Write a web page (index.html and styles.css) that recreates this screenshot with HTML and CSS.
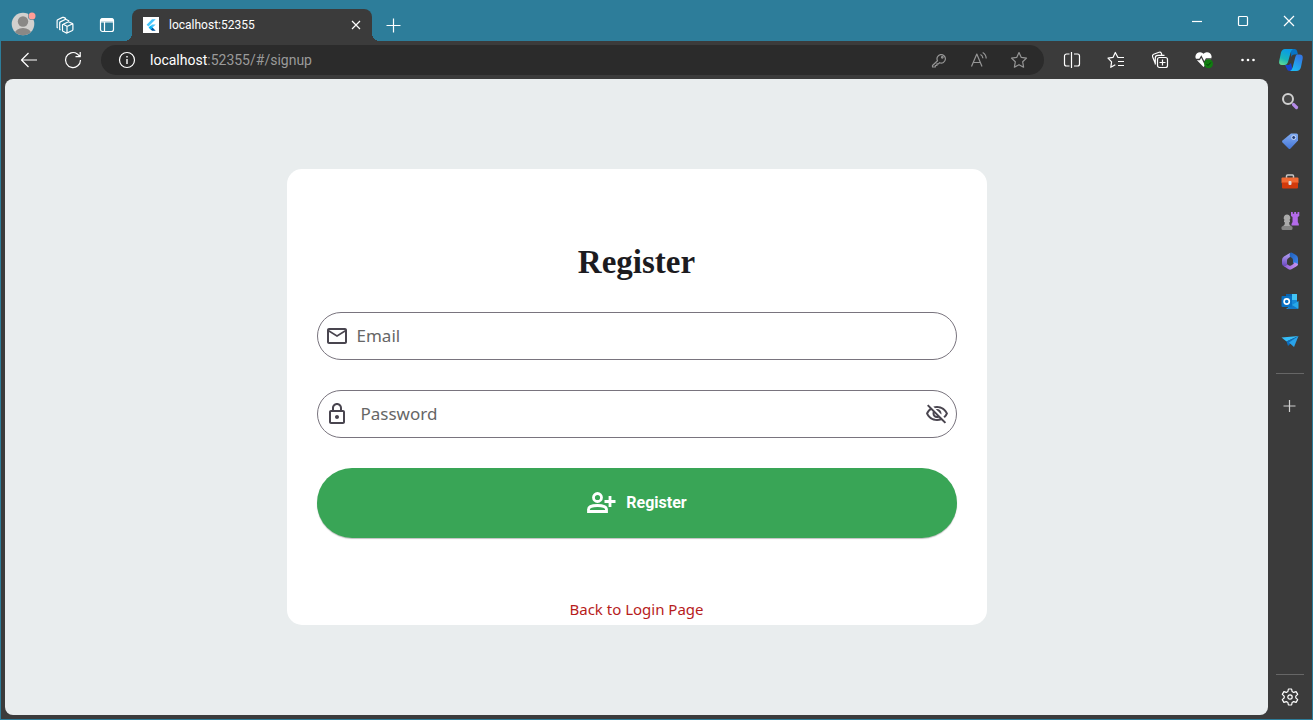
FILE: index.html
```html
<!DOCTYPE html>
<html lang="en">
<head>
<meta charset="utf-8">
<title>localhost:52355</title>
<link rel="stylesheet" href="styles.css">
</head>
<body>
<div class="window">
  <header class="titlebar">
    <button class="icon-btn profile" aria-label="Profile">
      <svg width="26" height="26" viewBox="0 0 26 26"><defs><clipPath id="face"><circle cx="12" cy="14" r="11.3"/></clipPath></defs><circle cx="12" cy="14" r="11.3" fill="#d2d0ce"/><g clip-path="url(#face)" fill="#8a8886"><circle cx="12" cy="11.500" r="5.200"/><ellipse cx="12" cy="24" rx="8.400" ry="6"/></g><circle cx="21" cy="6" r="4" fill="#2d7d9a"/><circle cx="21" cy="6" r="3.500" fill="#ff9e97"/></svg>
    </button>
    <button class="icon-btn" aria-label="Workspaces">
      <svg class="line" width="18" height="18" viewBox="0 0 18 18"><path d="M7.200 8.300 10.500 10q.5.300.5 1v6q-.2.300-.7 0L7 15.300q-.5-.3-.5-1V8.800q0-.6.700-.5zM7.200 8.300 12 6q.5-.3 1 0l3.500 1.600q.4.300.4 1v5q0 .6-.5.900L11 17M11 10.500l5.700-2.700M4.500 14l-.8-.5V6.800q0-.6.6-.9l4.900-2.400q.5-.2 1 0l3 1.500M1.800 12l-.7-.5V4.700q0-.6.600-.9l4.900-2.400q.5-.2 1 0l2.500 1.200"/></svg>
    </button>
    <button class="icon-btn" aria-label="Tab actions">
      <svg class="line" width="18" height="18" viewBox="0 0 18 18"><rect x="2.500" y="2.500" width="13" height="13" rx="2"/><path d="M2.500 6h13M6.500 6v9.500"/><path d="M3 4h12" stroke-width="3"/></svg>
    </button>
    <div class="tab">
      <svg width="16" height="16" viewBox="0 0 16 16"><path fill="#fff" d="M0 0h16v16H0z"/><path fill="#47c5fb" d="M9 2.200h3.700L5.500 9.500 3.600 7.700zM9 7.400h3.700l-3.200 3.200-1.900 1.900-1.900-1.900z"/><path fill="#00569e" d="m7.600 12.300 1.900-1.700 3.200 3.200H9z"/><path fill="#00b5f8" d="m5.700 10.600 1.900-1.900 1.900 1.900-1.900 1.900z"/></svg>
      <span class="tab-title">localhost:52355</span>
      <button class="tab-close" aria-label="Close tab"><svg class="line" width="10" height="10" viewBox="0 0 10 10"><path d="m1 1 8 8M9 1 1 9"/></svg></button>
    </div>
    <button class="icon-btn" aria-label="New tab"><svg class="line" width="16" height="16" viewBox="0 0 16 16"><path d="M8.500 1.500v14M1.500 8.500h14"/></svg></button>
    <div class="window-controls">
      <button class="control" aria-label="Minimize"><svg class="line" width="12" height="12" viewBox="0 0 12 12"><path d="M1 6.500h10"/></svg></button>
      <button class="control" aria-label="Maximize"><svg class="line" width="12" height="12" viewBox="0 0 12 12"><rect x="1.500" y="1.500" width="9" height="9" rx="1"/></svg></button>
      <button class="control" aria-label="Close"><svg class="line" width="12" height="12" viewBox="0 0 12 12"><path d="m1 1 10 10M11 1 1 11"/></svg></button>
    </div>
  </header>

  <nav class="toolbar" aria-label="Browser toolbar">
    <button class="tool" aria-label="Back"><svg class="line" width="18" height="18" viewBox="0 0 18 18"><path d="M17 9H1.500M8.500 2l-7 7 7 7"/></svg></button>
    <button class="tool" aria-label="Refresh"><svg class="line" width="18" height="18" viewBox="0 0 18 18"><path d="M16.500 9A7.500 7.500 0 1 1 13.300 2.900L16 5.500M16.200 1v4.700h-4.700"/></svg></button>
    <div class="address">
      <button class="address-btn info" aria-label="Site information"><svg class="line" width="18" height="18" viewBox="0 0 18 18"><circle cx="9" cy="9" r="7.500"/><path d="M9 8v5M9 5v1.500" stroke-width="1.400"/></svg></button>
      <div class="url" role="textbox" aria-label="Address"><span class="host">localhost</span>:52355/#/signup</div>
      <button class="address-btn" aria-label="Passwords"><svg class="line" width="18" height="18" viewBox="0 0 18 18"><path d="M7.500 9.800 2.500 14.500v1.500h2.800V14.500h1.600v-1.600h1.500l1.200-1.200A4.200 4.200 0 1 0 7.500 9.800z"/><circle cx="12.300" cy="6.300" r=".8"/></svg></button>
      <button class="address-btn" aria-label="Read aloud"><svg class="line" width="18" height="18" viewBox="0 0 18 18"><path d="M1.500 15.500 6.800 3l5.200 12.500M3.300 11.500h7M10.500 3.500q2.200 1.200 2.400 3.800M12.700 1.500q3.400 1.900 3.500 6"/></svg></button>
      <button class="address-btn" aria-label="Add to favorites"><svg class="line" width="18" height="18" viewBox="0 0 18 18"><path d="m9 1.500 2.300 4.900 5.200.7-3.800 3.700.9 5.400L9 13.700l-4.600 2.500.9-5.400-3.800-3.700 5.200-.7z"/></svg></button>
    </div>
    <div class="tools">
      <button class="tool" aria-label="Split screen"><svg class="line" width="18" height="18" viewBox="0 0 18 18"><path d="M6.500 3H3.500a2 2 0 0 0-2 2v8a2 2 0 0 0 2 2h3M11 3h3.500a2 2 0 0 1 2 2v8a2 2 0 0 1-2 2H11M8.500 1v16"/></svg></button>
      <button class="tool" aria-label="Favorites"><svg class="line" width="18" height="18" viewBox="0 0 18 18"><path d="M11 6.500 8.300 1.500 6 6.400l-5 .7 3.600 3.700-.8 5.500 4.500-2.500M10.500 6.500h6.500M11 10.500h6M11 14.500h6"/></svg></button>
      <button class="tool" aria-label="Collections"><svg class="line" width="18" height="18" viewBox="0 0 18 18"><rect x="6.500" y="6.500" width="10" height="10" rx="2"/><path d="M11.500 8.500v6M8.500 11.500h6M4.300 13.500V7q0-2.700 2.700-2.700h6.500M4.300 12.500 1.600 5.800Q1 4 2.600 3.300l5.500-2q1.500-.5 2.300 1l.6 2"/></svg></button>
      <button class="tool" aria-label="Browser essentials"><svg width="20" height="20" viewBox="0 0 20 20"><path fill="#fff" d="M9.500 17 2.500 9.800a4.600 4.600 0 0 1 7-6 4.600 4.600 0 0 1 7 6z"/><path fill="none" stroke="#3b3b3b" stroke-width="1.300" d="M1 9.500h4.500l1.800-3 3 6 2-3.500h5"/><circle cx="14.500" cy="13.800" r="4.500" fill="#107c10"/><path fill="none" stroke="#053f05" d="m12.500 14 1.500 1.500 2.800-3"/></svg></button>
      <button class="tool" aria-label="Settings and more"><svg width="18" height="18" viewBox="0 0 18 18" fill="#fff"><circle cx="3.500" cy="9" r="1.300"/><circle cx="9" cy="9" r="1.300"/><circle cx="14.500" cy="9" r="1.300"/></svg></button>
    </div>
    <button class="tool copilot" aria-label="Copilot"><svg width="26" height="26" viewBox="0 0 26 26"><defs><linearGradient id="cp1" x1="0" y1="1" x2=".4" y2="0"><stop offset="0" stop-color="#70e38b"/><stop offset=".45" stop-color="#18b5ba"/><stop offset="1" stop-color="#0a9be4"/></linearGradient><linearGradient id="cp2" x1="0" y1="1" x2=".5" y2="0"><stop offset="0" stop-color="#19c3f4"/><stop offset="1" stop-color="#3279e5"/></linearGradient></defs><path fill="#0873c5" d="M13 2h3.500q2 0 2.600 2l.9 3.500h-4q-2 0-2.800 2.500z"/><path fill="#1742cf" d="M7 18h4l2-2 2 8h-3q-2.600 0-3.300-2.500z"/><path fill="url(#cp1)" d="M7 2h8q-1.600.7-2.500 4L10 15q-1 3-3.500 3H4q-3.500 0-2.800-4L3 5.500Q4 2 7 2z"/><path fill="url(#cp2)" d="M19 7.500h2.500q3.800 0 3.200 4L23 20q-1 4-4.500 4H12q2-1 2.800-4l2.400-9.500q.5-2.500 1.800-3z"/></svg></button>
  </nav>

  <main class="page">
    <form class="card">
      <h1 class="card-title">Register</h1>
      <label class="field">
        <svg class="field-icon" viewBox="0 0 24 24"><path d="M22 6c0-1.100-.9-2-2-2H4c-1.100 0-2 .9-2 2v12c0 1.100.9 2 2 2h16c1.100 0 2-.9 2-2V6zm-2 0-8 5-8-5h16zm0 12H4V8l8 5 8-5v10z"/></svg>
        <input class="field-input" type="email" placeholder="Email" aria-label="Email">
      </label>
      <div class="field field-password">
        <svg class="field-icon" viewBox="0 0 24 24"><path d="M18 8h-1V6c0-2.760-2.240-5-5-5S7 3.240 7 6v2H6c-1.100 0-2 .9-2 2v10c0 1.100.9 2 2 2h12c1.100 0 2-.9 2-2V10c0-1.100-.9-2-2-2zM9 6c0-1.660 1.340-3 3-3s3 1.340 3 3v2H9V6zm9 14H6V10h12v10zm-6-3c1.100 0 2-.9 2-2s-.9-2-2-2-2 .9-2 2 .9 2 2 2z"/></svg>
        <input class="field-input" type="password" placeholder="Password" aria-label="Password">
        <button class="eye" type="button" aria-label="Show password"><svg class="field-icon" viewBox="0 0 24 24"><path d="M12 6c3.790 0 7.170 2.130 8.820 5.500-.59 1.220-1.420 2.270-2.410 3.120l1.410 1.410c1.390-1.230 2.490-2.770 3.180-4.530C21.270 7.110 17 4 12 4c-1.270 0-2.490.2-3.640.57l1.650 1.650C10.660 6.090 11.320 6 12 6zm-1.070 1.140L13 9.210c.57.25 1.030.71 1.280 1.280l2.070 2.070c.08-.34.14-.7.14-1.070C16.500 9.010 14.480 7 12 7c-.37 0-.72.050-1.070.14zM2.010 3.870l2.680 2.680C3.060 7.830 1.770 9.530 1 11.500 2.730 15.890 7 19 12 19c1.520 0 2.980-.29 4.320-.82l3.420 3.420 1.410-1.410L3.420 2.450 2.010 3.870zm7.500 7.500 2.610 2.610c-.04.010-.08.020-.12.020-1.380 0-2.500-1.120-2.500-2.500 0-.05.010-.08.010-.13zm-3.400-3.400 1.750 1.750c-.23.55-.36 1.150-.36 1.780 0 2.480 2.020 4.500 4.500 4.500.63 0 1.230-.13 1.770-.36l.98.98c-.88.24-1.800.38-2.750.38-3.790 0-7.170-2.130-8.820-5.500.7-1.430 1.720-2.610 2.930-3.530z"/></svg></button>
      </div>
      <button class="submit" type="button">
        <svg width="30" height="30" viewBox="0 0 30 30"><g fill="none" stroke="#fff" stroke-width="2.800"><circle cx="11.500" cy="9.500" r="4"/><path d="M2.500 23.500v-2q0-4 9-4t9 4v2zM24 8v11M18.500 13.500h11"/></g></svg>
        <span>Register</span>
      </button>
      <a class="back-link" href="#/login">Back to Login Page</a>
    </form>
  </main>

  <aside class="sidebar" aria-label="Browser sidebar">
    <button class="side-btn" aria-label="Search"><svg width="18" height="18" viewBox="0 0 18 18"><path stroke="#b58be8" stroke-width="3.200" stroke-linecap="round" d="m12.500 12.500 3 3"/><circle cx="7" cy="7" r="5" fill="#464646" stroke="#d0d0d0" stroke-width="2"/></svg></button>
    <button class="side-btn" aria-label="Shopping"><svg width="18" height="18" viewBox="0 0 18 18"><defs><linearGradient id="tag" x2="0" y2="1"><stop stop-color="#82acf1"/><stop offset="1" stop-color="#4476d7"/></linearGradient></defs><path fill="url(#tag)" d="M10 1.500h5.500q1.500 0 1.500 1.500v5.500L9.500 16.500q-1 1-2 0l-6-6q-1-1 0-2z"/><circle cx="12.700" cy="5.500" r="2" fill="#26427b" stroke="#cfe0ff"/></svg></button>
    <button class="side-btn" aria-label="Tools"><svg width="18" height="18" viewBox="0 0 18 18"><path fill="none" stroke="#c8c8c8" stroke-width="1.500" d="M5.500 6V4q0-1 1-1h5q1 0 1 1v2"/><rect x=".5" y="5.500" width="17" height="6" rx="1" fill="#f26a34"/><path fill="#d13a0c" d="M1 10.500h16v5q0 1-1 1H2q-1 0-1-1z"/><rect x="7.500" y="9" width="3" height="4" rx="1" fill="#ddd"/></svg></button>
    <button class="side-btn" aria-label="Games"><svg width="20" height="20" viewBox="0 0 20 20"><path fill="#b36bea" d="M11 1h1.800v1.800h1.400V1h1.900v1.800h1.400V1h1.800v4l-1.500 1v5l1 2v1.500h-7.300V13l1-2V6L11 5z"/><path fill="#aaa" d="M7 3.500a3.300 3.300 0 0 1 2.200 5.800H10v2H9q0 2.700 2 3.700H3q2-1 2-3.700H4v-2h.8A3.300 3.300 0 0 1 7 3.500z"/><rect x="1.500" y="15" width="11" height="4" rx="1.500" fill="#858585"/></svg></button>
    <button class="side-btn" aria-label="Microsoft 365"><svg width="18" height="18" viewBox="0 0 18 18"><defs><linearGradient id="m1" x2="0" y2="1"><stop stop-color="#b9a5f5"/><stop offset="1" stop-color="#6a48c0"/></linearGradient><linearGradient id="m2" x2="1" y2="1"><stop stop-color="#1f5fb8"/><stop offset="1" stop-color="#3f86f0"/></linearGradient><linearGradient id="m3" x2="1"><stop stop-color="#8b5bd8"/><stop offset="1" stop-color="#c995f2"/></linearGradient></defs><path fill="url(#m1)" d="M9.500.7 3 4.400Q1 5.600 1 8v3.500q0 2.200 1.800 2.600 2.200.4 3.200-1.800V8.500q0-1.500 1.300-2.300L9 5.100V3q0-1.500.5-2.300z"/><path fill="url(#m2)" d="M9.500.7q.8-.4 1.500 0l4 2.200q2 1.200 2 3.500v5q0 1.500-1.500 1.500L12 11V8q0-1.500-1.300-2.200L9 4.800q-.9-3 .5-4.100z"/><path fill="url(#m3)" d="M2.500 14q2.500.3 3.500-1.800l2 1.200q1 .5 2 0l2-1.200q1.300-.8 1.300-2L17 12q0 1.500-1.800 2.600L10.500 17.300q-1.500.8-3 0z"/></svg></button>
    <button class="side-btn" aria-label="Outlook"><svg width="18" height="18" viewBox="0 0 18 18"><path fill="#1689d8" d="M5 2h11v12H5z"/><path fill="#43c4f5" d="M11 2h5v6h-5z"/><path fill="#0a64ad" d="M5 2h6v4H5z"/><path fill="#28a8ea" d="M5 17h11.500q1 0 1-1V9L11 13z"/><path fill="#1279c9" d="m11 13 6.500 4H6z"/><rect x=".5" y="4" width="10.500" height="11" rx="1" fill="#0871c4"/><circle cx="5.700" cy="9.500" r="2.600" fill="none" stroke="#fff" stroke-width="1.600"/></svg></button>
    <button class="side-btn" aria-label="Drop"><svg width="18" height="18" viewBox="0 0 18 18"><path fill="#35bdf8" d="M.5 5.500 17.500 4 5.500 9.500z"/><path fill="#0d6fbe" d="M5.500 9.500 17.500 4 7 14z"/><path fill="#29a3ea" d="M8 10.500 17.500 4 13 15z"/></svg></button>
    <hr class="side-rule">
    <button class="side-btn" aria-label="Customize"><svg class="line soft" width="14" height="14" viewBox="0 0 14 14"><path d="M6.500 1v12M.5 7h12"/></svg></button>
    <div class="side-foot">
      <hr class="side-rule">
      <button class="side-btn" aria-label="Sidebar settings"><svg class="line" width="18" height="18" viewBox="0 0 18 18"><path d="m7.400 1-.5 2.500-1.600.9L2.900 3.600 1.300 6.400l1.900 1.700v1.800l-1.900 1.700 1.600 2.800 2.400-.8 1.600.9.500 2.500h3.200l.5-2.500 1.600-.9 2.400.8 1.600-2.800-1.900-1.700V8.100l1.900-1.700-1.600-2.800-2.400.8-1.600-.9-.5-2.500z"/><circle cx="9" cy="9" r="2.200"/></svg></button>
    </div>
  </aside>
</div>
</body>
</html>
```
FILE: styles.css
```css
* {
  box-sizing: border-box;
}

body {
  margin: 0;
  font-family: "Noto Sans", sans-serif;
}

button {
  display: flex;
  align-items: center;
  justify-content: center;
  padding: 0;
  border: 0;
  background: none;
  color: inherit;
  font: inherit;
  cursor: pointer;
}

svg {
  display: block;
  flex: none;
}

.line {
  fill: none;
  stroke: #fff;
  stroke-width: 1.2;
  stroke-linejoin: round;
}

.window {
  display: grid;
  grid-template-columns: 1fr 44px;
  grid-template-rows: 41px 38px 1fr;
  min-height: 100vh;
  border: 1px solid #2d7d9a;
  border-top: 0;
  background: #3b3b3b;
}

/* Title bar */

.titlebar {
  grid-column: 1 / -1;
  display: flex;
  align-items: flex-end;
  padding-left: 3px;
  background: #2d7d9a;
}

.icon-btn {
  width: 42px;
  height: 32px;
}

.profile {
  width: 40px;
  margin-bottom: 2px;
}

.tab {
  position: relative;
  display: flex;
  align-items: center;
  gap: 10px;
  width: 240px;
  height: 32px;
  margin-left: 4px;
  padding: 0 11px;
  border-radius: 8px 8px 0 0;
  background: #3b3b3b;
  color: #fff;
  font-family: Roboto, sans-serif;
  font-size: 12px;
}

.tab::before,
.tab::after {
  content: "";
  position: absolute;
  bottom: 0;
  width: 8px;
  height: 8px;
}

.tab::before {
  right: 100%;
  background: radial-gradient(circle at 0 0, transparent 8px, #3b3b3b 8px);
}

.tab::after {
  left: 100%;
  background: radial-gradient(circle at 100% 0, transparent 8px, #3b3b3b 8px);
}

.tab-title {
  flex: 1;
}

.window-controls {
  display: flex;
  align-self: stretch;
  margin-left: auto;
}

.control {
  width: 46px;
  height: 42px;
}

/* Toolbar */

.toolbar {
  grid-column: 1 / -1;
  display: flex;
  align-items: center;
  padding-left: 6px;
}

.tool {
  width: 44px;
  height: 38px;
}

.tools {
  display: flex;
  margin-left: 6px;
}

.copilot {
  width: 42px;
}

.address {
  flex: 1;
  display: flex;
  align-items: center;
  height: 30px;
  margin-left: 6px;
  padding: 0 5px 0 6px;
  border-radius: 15px;
  background: #2b2b2b;
}

.address-btn {
  width: 40px;
  height: 30px;
  opacity: 0.5;
}

.info {
  opacity: 1;
}

.url {
  flex: 1;
  padding-left: 3px;
  color: #9a9a9a;
  font-family: Roboto, sans-serif;
  font-size: 14px;
  line-height: 20px;
}

.host {
  color: #fff;
}

/* Page */

.page {
  display: flex;
  align-items: center;
  justify-content: center;
  margin: 0 0 4px 4px;
  padding: 16px;
  border-radius: 8px;
  background: #e9edee;
}

.card {
  display: flex;
  flex-direction: column;
  gap: 30px;
  width: 100%;
  max-width: 700px;
  padding: 73px 30px 6px;
  border-radius: 15px;
  background: #fff;
}

.card-title {
  margin: 0;
  color: #1c1b1f;
  font-family: "Liberation Serif", serif;
  font-size: 33px;
  font-weight: 700;
  line-height: 40px;
  text-align: center;
}

.field {
  display: flex;
  align-items: center;
  gap: 8px;
  height: 48px;
  padding: 0 7px;
  border: 1px solid #79747e;
  border-radius: 24px;
}

.field-password {
  gap: 12px;
}

.field-icon {
  width: 24px;
  height: 24px;
  fill: #49454f;
}

.field-input {
  flex: 1;
  min-width: 0;
  padding: 0;
  border: 0;
  outline: 0;
  background: none;
  color: #1c1b1f;
  font: 17px/24px "Noto Sans", sans-serif;
}

.field-input::placeholder {
  color: #666;
  opacity: 1;
}

.submit {
  gap: 10px;
  height: 70px;
  border-radius: 35px;
  background: #39a556;
  box-shadow: 0 1px 1px rgba(0, 0, 0, 0.25);
  color: #fff;
  font: 700 16px/24px Roboto, sans-serif;
}

.back-link {
  align-self: center;
  margin-top: 31px;
  color: #b71c1c;
  font-size: 15px;
  line-height: 20px;
  text-decoration: none;
}

/* Sidebar */

.sidebar {
  display: flex;
  flex-direction: column;
  align-items: center;
  padding: 2px 0;
}

.side-btn {
  width: 44px;
  height: 40px;
}

.side-rule {
  width: 28px;
  margin: 12px 0;
  border: 0;
  border-top: 1px solid #666;
}

.side-foot {
  margin-top: auto;
  display: flex;
  flex-direction: column;
  align-items: center;
}

.side-foot .side-rule {
  margin: 0 0 2px;
}

.soft {
  stroke: #d0d0d0;
}
```
